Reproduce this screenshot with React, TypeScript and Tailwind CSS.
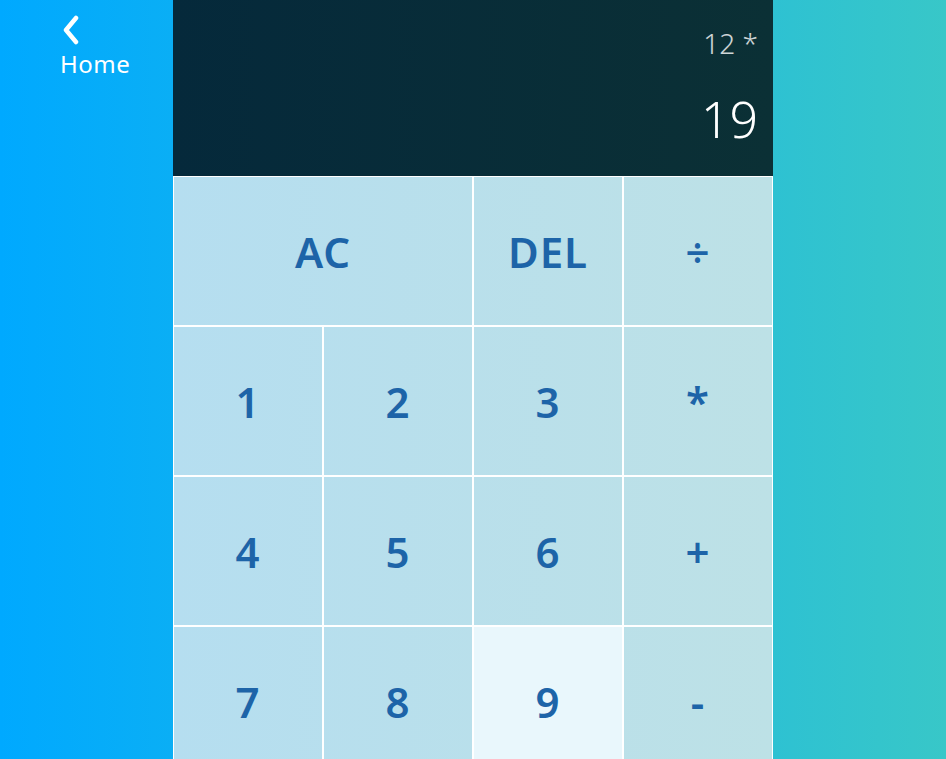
import React from "react";

const keys = [
  { label: "AC", span: true },
  { label: "DEL" },
  { label: "÷" },
  { label: "1" },
  { label: "2" },
  { label: "3" },
  { label: "*" },
  { label: "4" },
  { label: "5" },
  { label: "6" },
  { label: "+" },
  { label: "7" },
  { label: "8" },
  { label: "9", hover: true },
  { label: "-" },
  { label: "." },
  { label: "0" },
  { label: "=", span: true },
];

const App = () => {
  return (
    <div
      className="flex h-screen w-full overflow-hidden bg-[linear-gradient(to_right,#00a9ff,#38c7c8)]"
      style={{ fontFamily: '"Noto Sans", "DejaVu Sans", sans-serif' }}
    >
      <div className="w-[173px] shrink-0 pl-[60px] pt-[15px] text-white">
        <svg width="20" height="31" viewBox="0 0 20 31" className="ml-[1px]">
          <path
            d="M15 3 L5 15 L15 27"
            fill="none"
            stroke="white"
            strokeWidth="4.5"
            strokeLinecap="round"
            strokeLinejoin="round"
          />
        </svg>
        <div className="mt-[4px] text-[24px] leading-[28px] tracking-[0.5px]">Home</div>
      </div>

      <div className="w-[600px] shrink-0">
        <div className="flex h-[176px] flex-col items-end justify-between bg-[linear-gradient(to_right,#05293b,#0b3035)] pr-[15px] pt-[26px] pb-[28px]">
          <div className="text-[28px] leading-[34px] font-light text-white/80">12 *</div>
          <div className="text-[50px] leading-[58px] font-light text-white">19</div>
        </div>
        <div className="grid grid-cols-4 bg-[linear-gradient(to_right,#b5def0,#bde1e6)]">
          {keys.map((k) => (
            <button
              key={k.label}
              className={`h-[150px] border border-white text-[42px] font-semibold tracking-[1px] text-[#1d64a8] ${
                k.span ? "col-span-2" : ""
              } ${k.hover ? "bg-[#e9f7fc]" : ""}`}
            >
              {k.label}
            </button>
          ))}
        </div>
      </div>

      <div className="flex-1" />
    </div>
  );
};

export default App;
